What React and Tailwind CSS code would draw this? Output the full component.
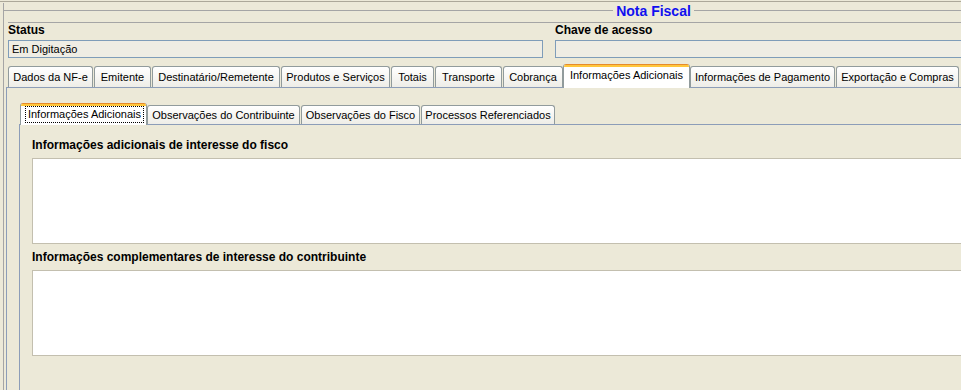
import React from 'react';

const outerTabs = [
  { label: 'Dados da NF-e', cls: 'w-[85px] ml-0' },
  { label: 'Emitente', cls: 'w-[57px] ml-[1px]' },
  { label: 'Destinatário/Remetente', cls: 'w-[128px] ml-[1px]' },
  { label: 'Produtos e Serviços', cls: 'w-[109px] ml-[1px]' },
  { label: 'Totais', cls: 'w-[43px] ml-[1px]' },
  { label: 'Transporte', cls: 'w-[67px] ml-[1px]' },
  { label: 'Cobrança', cls: 'w-[60px] ml-[1px]' },
  { label: 'Informações Adicionais', cls: 'w-[127px] ml-0', selected: true },
  { label: 'Informações de Pagamento', cls: 'w-[145px] ml-0' },
  { label: 'Exportação e Compras', cls: 'w-[123px] ml-[1px]' },
];

const innerTabs = [
  { label: 'Informações Adicionais', cls: 'w-[127px] ml-0', selected: true },
  { label: 'Observações do Contribuinte', cls: 'w-[153px] ml-0' },
  { label: 'Observações do Fisco', cls: 'w-[119px] ml-[1px]' },
  { label: 'Processos Referenciados', cls: 'w-[134px] ml-[1px]' },
];

// XP style tab: orange cap when selected, light gradient otherwise
function OuterTab({ label, cls, selected }) {
  if (selected) {
    return (
      <div className={`${cls} relative z-10 -mb-px h-[24px] shrink-0 overflow-hidden rounded-t-[3px] border-x border-[#919B9C] bg-white`}>
        <div className="h-px bg-[#E68B2C]" />
        <div className="h-[2px] bg-[#FFC73C]" />
        <div className="pt-[1px] text-center leading-[14px]">{label}</div>
      </div>
    );
  }
  return (
    <div className={`${cls} h-[21px] shrink-0 rounded-t-[3px] border-x border-t border-[#919B9C] bg-linear-to-b from-white to-[#EEEDE7] pt-[3px] text-center leading-[14px]`}>
      {label}
    </div>
  );
}

function InnerTab({ label, cls, selected }) {
  if (selected) {
    return (
      <div className={`${cls} relative z-10 -mb-px h-[22px] shrink-0 overflow-hidden rounded-t-[3px] border-x border-[#919B9C] bg-white`}>
        <div className="h-px bg-[#E68B2C]" />
        <div className="h-[2px] bg-[#FFC73C]" />
        <div className="ml-[4px] mr-[2px] h-[17px] border border-dotted border-black text-center leading-[14px]">
          {label}
        </div>
      </div>
    );
  }
  return (
    <div className={`${cls} h-[19px] shrink-0 rounded-t-[3px] border-x border-t border-[#919B9C] bg-linear-to-b from-white to-[#EEEDE7] pt-[2px] text-center leading-[14px]`}>
      {label}
    </div>
  );
}

export default function App() {
  return (
    <div className="h-[390px] w-[961px] overflow-hidden bg-[#ECE9D8] pt-[1px] font-['Liberation_Sans',Arial,sans-serif] text-[11px] text-black">
      <div className="h-px w-full bg-[#ACA899]" />

      {/* Nota Fiscal titled border */}
      <div className="ml-[3px] mt-[8px] h-[400px] w-[1100px] border-l border-[#A5A5A5]">
        <div className="-mt-[7px] flex h-[15px] items-start">
          <div className="mt-[7px] h-px w-[609px] bg-[#A5A5A5]" />
          <div className="mt-[1px] w-[81px] text-center text-[14px] font-bold leading-[15px] text-[#1010F0]">
            Nota Fiscal
          </div>
          <div className="mt-[7px] h-px flex-1 bg-[#A5A5A5]" />
        </div>

        {/* Status / Chave de acesso */}
        <div className="ml-[4px] mt-[4px] grid grid-cols-[535px_1fr] gap-x-[12px] border-t border-[#A5A5A5]">
          <div>
            <div className="h-[14px] text-[12px] font-bold leading-[14px]">Status</div>
            <div className="mt-[3px] h-[18px] border border-[#7F9DB9] bg-[#EFEDE4] pl-[3px] leading-[16px]">
              Em Digitação
            </div>
          </div>
          <div>
            <div className="h-[14px] text-[12px] font-bold leading-[14px]">Chave de acesso</div>
            <div className="mt-[3px] h-[18px] border border-[#7F9DB9] bg-[#EFEDE4]" />
          </div>
        </div>

        {/* Outer tabbed pane */}
        <div className="ml-[2px] mt-[6px]">
          <div className="flex h-[23px] items-end pl-[2px]">
            {outerTabs.map((t) => (
              <OuterTab key={t.label} {...t} />
            ))}
          </div>
          <div className="h-[320px] border-l border-t border-[#8C9DB8] pl-[12px] pt-[15px]">
            {/* Inner tabbed pane */}
            <div className="flex h-[21px] items-end pl-[1px]">
              {innerTabs.map((t) => (
                <InnerTab key={t.label} {...t} />
              ))}
            </div>
            <div className="h-[300px] border-l border-t border-[#8C9DB8] pl-[12px] pt-[13px]">
              <div className="h-[14px] text-[12px] font-bold leading-[14px]">
                Informações adicionais de interesse do fisco
              </div>
              <div className="mt-[6px] h-[86px] border border-[#C3BFAF] bg-white" />
              <div className="mt-[6px] h-[14px] text-[12px] font-bold leading-[14px]">
                Informações complementares de interesse do contribuinte
              </div>
              <div className="mt-[6px] h-[86px] border border-[#C3BFAF] bg-white" />
            </div>
          </div>
        </div>
      </div>
    </div>
  );
}
